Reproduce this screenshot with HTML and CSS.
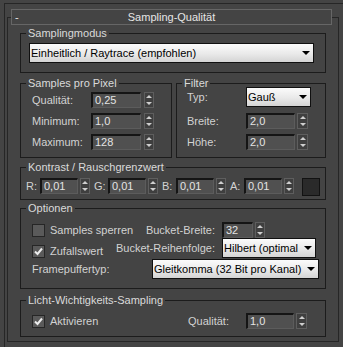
FILE: index.html
```html
<!DOCTYPE html>
<html lang="de">
<head>
<meta charset="utf-8">
<title>Sampling-Qualität</title>
<link rel="stylesheet" href="styles.css">
</head>
<body>
<div class="frame">
  <div class="rollout">
    <div class="rollout-head">
      <span class="collapse">-</span>
      <span class="rollout-title">Sampling-Qualität</span>
      <span></span>
    </div>

    <div class="group g-mode">
      <div class="group-title">Samplingmodus</div>
      <div class="dropdown dd-mode"><span class="dd-text">Einheitlich / Raytrace (empfohlen)</span><i class="caret"></i></div>
    </div>

    <div class="split">
      <div class="group g-spp">
        <div class="group-title">Samples pro Pixel</div>
        <div class="form-grid spp-grid">
          <span class="label">Qualität:</span><span class="field">0,25</span><span class="spin"><i class="up"></i><i class="down"></i></span>
          <span class="label">Minimum:</span><span class="field">1,0</span><span class="spin"><i class="up"></i><i class="down"></i></span>
          <span class="label">Maximum:</span><span class="field">128</span><span class="spin"><i class="up"></i><i class="down"></i></span>
        </div>
      </div>
      <div class="group g-filter">
        <div class="group-title">Filter</div>
        <div class="form-grid filter-grid">
          <span class="label">Typ:</span><span class="dropdown dd-typ"><span class="dd-text">Gauß</span><i class="caret"></i></span>
          <span class="label">Breite:</span><span class="field">2,0</span><span class="spin"><i class="up"></i><i class="down"></i></span>
          <span class="label">Höhe:</span><span class="field">2,0</span><span class="spin"><i class="up"></i><i class="down"></i></span>
        </div>
      </div>
    </div>

    <div class="group g-contrast">
      <div class="group-title">Kontrast / Rauschgrenzwert</div>
      <div class="contrast-row">
        <div class="cc"><span class="c-label">R:</span><span class="field c-field">0,01</span><span class="spin"><i class="up"></i><i class="down"></i></span></div>
        <div class="cc"><span class="c-label">G:</span><span class="field c-field">0,01</span><span class="spin"><i class="up"></i><i class="down"></i></span></div>
        <div class="cc"><span class="c-label">B:</span><span class="field c-field">0,01</span><span class="spin"><i class="up"></i><i class="down"></i></span></div>
        <div class="cc"><span class="c-label">A:</span><span class="field c-field">0,01</span><span class="spin"><i class="up"></i><i class="down"></i></span></div>
        <span class="swatch"></span>
      </div>
    </div>

    <div class="group g-opts">
      <div class="group-title">Optionen</div>
      <div class="opt-grid">
        <span class="check chk-1"><span class="box"></span><span>Samples sperren</span></span>
        <span class="label opt-label">Bucket-Breite:</span>
        <span class="opt-ctrl"><span class="field bw-field">32</span><span class="spin"><i class="up"></i><i class="down"></i></span></span>
        <span class="check chk-2"><span class="box"><svg viewBox="0 0 9 9" width="9" height="9"><path d="M1 4.5 L3.5 7 L8 1.5" stroke="#ececec" stroke-width="2" fill="none"/></svg></span><span>Zufallswert</span></span>
        <span class="label opt-label lbl-2">Bucket-Reihenfolge:</span>
        <span class="dropdown dd-order"><span class="dd-text">Hilbert (optimal</span><i class="caret"></i></span>
        <div class="opt-frame">
          <span class="label fb-label">Framepuffertyp:</span>
          <span class="dropdown dd-fb"><span class="dd-text">Gleitkomma (32 Bit pro Kanal)</span><i class="caret"></i></span>
        </div>
      </div>
    </div>

    <div class="group g-light">
      <div class="group-title">Licht-Wichtigkeits-Sampling</div>
      <div class="light-row">
        <span class="check light-check"><span class="box"><svg viewBox="0 0 9 9" width="9" height="9"><path d="M1 4.5 L3.5 7 L8 1.5" stroke="#ececec" stroke-width="2" fill="none"/></svg></span><span>Aktivieren</span></span>
        <span class="label light-label">Qualität:</span>
        <span class="field light-field">1,0</span><span class="spin"><i class="up"></i><i class="down"></i></span>
      </div>
    </div>
  </div>
</div>
</body>
</html>
```
FILE: styles.css
```css
* { box-sizing: border-box; }
html, body { margin: 0; }
body {
  background: #444444;
  width: 343px;
  height: 347px;
  overflow: hidden;
  font-family: "Liberation Sans", Arial, sans-serif;
  font-size: 11px;
  line-height: 13px;
  color: #d2d2d2;
}

.frame {
  margin: 3px 0 0 4px;
  border-left: 1px solid #262626;
  border-top: 1px solid #262626;
  padding: 13px 0 0 2px;
  min-height: 344px;
}

.rollout {
  width: 332px;
  border: 1px solid #262626;
  padding: 0 12px 4px;
}

.rollout-head {
  display: grid;
  grid-template-columns: 1fr auto 1fr;
  align-items: center;
  height: 16px;
  margin: -9px -6px 0 -9px;
  border: 1px solid #666666;
  background: #444444;
  color: #e6e6e6;
}
.collapse { padding-left: 3px; }

.group { border: 1px solid #1c1c1c; }
.group-title {
  width: fit-content;
  margin: -7px 0 0 5px;
  padding: 0 2px;
  background: #444444;
  color: #dadada;
  white-space: nowrap;
}

.label { white-space: nowrap; }

/* dropdown */
.dropdown {
  display: flex;
  align-items: center;
  height: 20px;
  border: 1px solid #101010;
  background: linear-gradient(#fbfbfb, #e9e9e9 55%, #d4d4d4);
  color: #000000;
  padding: 0 3px 0 1px;
}
.dd-text { flex: 1; overflow: hidden; white-space: nowrap; }
.caret {
  flex-shrink: 0;
  width: 0;
  height: 0;
  border-left: 4px solid transparent;
  border-right: 4px solid transparent;
  border-top: 4px solid #000000;
}

/* numeric field */
.field {
  height: 16px;
  background: #505050;
  border-top: 2px solid #151515;
  border-left: 2px solid #151515;
  border-right: 1px solid #5c5c5c;
  border-bottom: 1px solid #5c5c5c;
  color: #e4e4e4;
  padding-left: 2px;
  line-height: 13px;
  white-space: nowrap;
}

/* spinner */
.spin {
  flex-shrink: 0;
  justify-self: end;
  width: 10px;
  height: 16px;
  border: 1px solid #5e5e5e;
  background: #3f3f3f;
  display: flex;
  flex-direction: column;
  justify-content: space-between;
  align-items: center;
  padding: 2px 0;
}
.spin .up {
  width: 0; height: 0;
  border-left: 3px solid transparent;
  border-right: 3px solid transparent;
  border-bottom: 3px solid #cfcfcf;
}
.spin .down {
  width: 0; height: 0;
  border-left: 3px solid transparent;
  border-right: 3px solid transparent;
  border-top: 3px solid #cfcfcf;
}

/* sampling mode */
.g-mode { margin-top: 8px; }
.dd-mode { margin: 3px 11px 9px 8px; }

/* split row */
.split { display: flex; gap: 4px; margin-top: 10px; }
.g-spp { width: 152px; }
.g-filter { flex: 1; }

.form-grid { display: grid; row-gap: 5px; align-items: center; }
.spp-grid {
  grid-template-columns: 59px 50px 13px;
  grid-auto-rows: 16px;
  margin: 2px 0 7px 11px;
}
.filter-grid {
  grid-template-columns: 59px 49px 13px;
  grid-template-rows: 21px 16px 16px;
  margin: -3px 0 7px 10px;
}
.filter-grid .spin { width: 11px; }
.dd-typ { grid-column: 2 / 4; width: 65px; align-self: start; }

/* contrast */
.g-contrast { margin-top: 9px; }
.contrast-row {
  display: flex;
  align-items: flex-start;
  height: 18px;
  margin: 4px 0 3px 5px;
}
.cc { display: flex; }
.cc + .cc { margin-left: 4px; }
.c-label { width: 14px; line-height: 16px; }
.c-field { width: 38px; }
.contrast-row .spin { margin-left: 2px; }
.swatch {
  width: 18px;
  height: 18px;
  margin-left: 8px;
  background: #2a2a2a;
  border: 1px solid #121212;
}

/* checkbox */
.check { display: flex; align-items: center; gap: 5px; white-space: nowrap; }
.box {
  flex-shrink: 0;
  width: 13px;
  height: 13px;
  border: 1px solid #262626;
  background: #5a5a5a;
  display: flex;
  align-items: center;
  justify-content: center;
}

/* options */
.g-opts { margin-top: 8px; }
.opt-grid {
  display: grid;
  grid-template-columns: 87px 103px auto;
  grid-template-rows: 16px 21px 20px;
  align-items: center;
  margin: 7px 0 9px 11px;
}
.opt-label { justify-self: end; margin-right: 7px; }
.chk-2 { align-self: end; margin-bottom: 1px; }
.opt-ctrl { display: flex; }
.bw-field { width: 31px; }
.opt-ctrl .spin { margin-left: 2px; }
.dd-order { width: 94px; align-self: start; }
.opt-frame { grid-column: 1 / -1; display: flex; align-items: center; height: 20px; }
.fb-label { width: 120px; }
.dd-fb { width: 167px; }

/* light sampling */
.g-light { margin-top: 11px; }
.light-row {
  display: flex;
  align-items: center;
  height: 16px;
  margin: 6px 0 7px 11px;
}
.light-check { width: 156px; }
.light-label { width: 58px; }
.light-field { width: 48px; }
.light-row .spin { margin-left: 2px; width: 11px; }
```
